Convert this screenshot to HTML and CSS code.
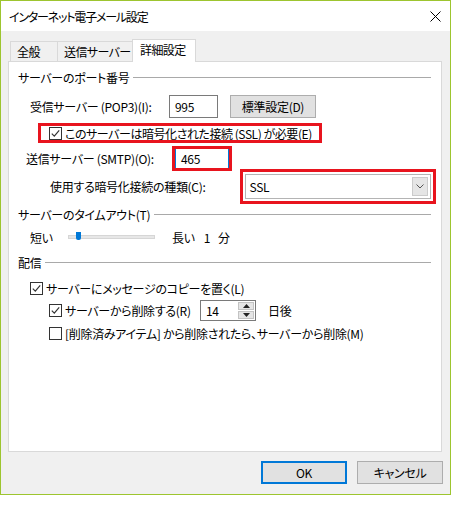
FILE: index.html
```html
<!DOCTYPE html>
<html lang="ja">
<head>
    <meta charset="UTF-8">
    <title>インターネット電子メール設定</title>
    <link rel="stylesheet" href="styles.css">
</head>
<body>
    <div class="dialog">
        <div class="titlebar">
            <span class="title">インターネット電子メール設定</span>
            <svg class="close" width="11" height="11" viewBox="0 0 11 11">
                <path d="M0.5 0.5 L10.5 10.5 M10.5 0.5 L0.5 10.5" stroke="#000" stroke-width="1" fill="none"/>
            </svg>
        </div>

        <div class="content">
            <div class="tabs">
                <div class="tab tab-general">全般</div>
                <div class="tab tab-send">送信サーバー</div>
                <div class="tab tab-active">詳細設定</div>
            </div>

            <div class="panel">
                <div class="row group h30">
                    <span>サーバーのポート番号</span><span class="rule"></span>
                </div>

                <div class="row h29">
                    <span class="label label-pop">受信サーバー (POP3)(I):</span>
                    <span class="textbox textbox-pop">995</span>
                    <button class="btn btn-default-port">標準設定(D)</button>
                </div>

                <div class="row h24">
                    <div class="mark mark-ssl">
                        <svg class="check" width="13" height="13" viewBox="0 0 13 13">
                            <rect x="0.5" y="0.5" width="12" height="12" fill="#fff" stroke="#333"/>
                            <path d="M2.8 6.6 L5.3 9.1 L10.2 3.4" stroke="#333" stroke-width="1.2" fill="none"/>
                        </svg>
                        <span class="check-text ssl-text">このサーバーは暗号化された接続 (SSL) が必要(E)</span>
                    </div>
                </div>

                <div class="row h26">
                    <span class="label label-smtp">送信サーバー (SMTP)(O):</span>
                    <span class="mark-box">
                        <span class="textbox textbox-smtp">465</span>
                    </span>
                </div>

                <div class="row h30">
                    <span class="label label-enc">使用する暗号化接続の種類(C):</span>
                    <div class="select">
                        <span>SSL</span>
                        <span class="drop">
                            <svg width="8" height="5" viewBox="0 0 8 5">
                                <path d="M0.5 0.5 L4 4 L7.5 0.5" stroke="#555" stroke-width="1" fill="none"/>
                            </svg>
                        </span>
                    </div>
                </div>

                <div class="row group h26">
                    <span>サーバーのタイムアウト(T)</span><span class="rule"></span>
                </div>

                <div class="row h20">
                    <span class="label label-short">短い</span>
                    <div class="track"><span class="thumb"></span></div>
                    <span class="label-long">長い</span>
                    <span class="minutes">1</span><span class="unit">分</span>
                </div>

                <div class="row group h30">
                    <span>配信</span><span class="rule"></span>
                </div>

                <div class="row h23 indent1">
                    <svg class="check" width="13" height="13" viewBox="0 0 13 13">
                        <rect x="0.5" y="0.5" width="12" height="12" fill="#fff" stroke="#333"/>
                        <path d="M2.8 6.6 L5.3 9.1 L10.2 3.4" stroke="#333" stroke-width="1.2" fill="none"/>
                    </svg>
                    <span class="check-text">サーバーにメッセージのコピーを置く(L)</span>
                </div>

                <div class="row h20 indent2">
                    <svg class="check" width="13" height="13" viewBox="0 0 13 13">
                        <rect x="0.5" y="0.5" width="12" height="12" fill="#fff" stroke="#333"/>
                        <path d="M2.8 6.6 L5.3 9.1 L10.2 3.4" stroke="#333" stroke-width="1.2" fill="none"/>
                    </svg>
                    <span class="check-text delete-text">サーバーから削除する(R)</span>
                    <div class="spin">
                        <span class="spin-value">14</span>
                        <span class="spin-buttons">
                            <span class="spin-btn">
                                <svg width="7" height="4" viewBox="0 0 7 4"><path d="M0 4 L3.5 0 L7 4 Z" fill="#222"/></svg>
                            </span>
                            <span class="spin-btn">
                                <svg width="7" height="4" viewBox="0 0 7 4"><path d="M0 0 L3.5 4 L7 0 Z" fill="#222"/></svg>
                            </span>
                        </span>
                    </div>
                    <span class="days">日後</span>
                </div>

                <div class="row h27 indent2">
                    <svg class="check" width="13" height="13" viewBox="0 0 13 13">
                        <rect x="0.5" y="0.5" width="12" height="12" fill="#fff" stroke="#333"/>
                    </svg>
                    <span class="check-text">[削除済みアイテム] から削除されたら、サーバーから削除(M)</span>
                </div>
            </div>

            <div class="footer">
                <button class="btn btn-ok">OK</button>
                <button class="btn btn-cancel">キャンセル</button>
            </div>
        </div>
    </div>
</body>
</html>
```

FILE: styles.css
```css
body {
    margin: 0;
    background-color: #fff;
    font-family: "Noto Sans CJK JP", "Noto Sans", sans-serif;
    font-size: 12px;
    color: #000;
    font-feature-settings: "palt";
    letter-spacing: -0.3px;
}

.dialog {
    width: 451px;
    height: 495px;
    box-sizing: border-box;
    border: 1px solid #9dc52f;
    display: flex;
    flex-direction: column;
    background-color: #f0f0f0;
}

.titlebar {
    height: 30px;
    background-color: #fff;
    display: flex;
    align-items: center;
    justify-content: space-between;
    padding: 0 9px 0 8px;
}

.title {
    font-size: 12px;
    letter-spacing: -1.2px;
}

.content {
    flex: 1;
    padding: 0 7px 0 7px;
}

.tabs {
    display: flex;
    align-items: flex-end;
    height: 31px;
    margin-bottom: -1px;
    padding-left: 2px;
}

.tab {
    box-sizing: border-box;
    height: 21px;
    border: 1px solid #d9d9d9;
    border-bottom: none;
    border-right: none;
    padding-left: 6px;
    line-height: 19px;
    white-space: nowrap;
    letter-spacing: -0.6px;
}

.tab-general {
    width: 47px;
}

.tab-send {
    width: 75px;
}

.tab-active {
    width: 64px;
    height: 23px;
    background-color: #fff;
    border-right: 1px solid #d9d9d9;
    padding-left: 7px;
    line-height: 20px;
    position: relative;
    z-index: 1;
}

.panel {
    width: 434px;
    height: 391px;
    box-sizing: border-box;
    border: 1px solid #d9d9d9;
    background-color: #fff;
    padding: 0 10px 0 9px;
}

.row {
    display: flex;
    align-items: center;
    white-space: nowrap;
}

.h20 { height: 20px; }
.h23 { height: 23px; }
.h24 { height: 24px; }
.h26 { height: 26px; }
.h27 { height: 27px; }
.h29 { height: 29px; }
.h30 { height: 30px; }

.group .rule {
    flex: 1;
    height: 1px;
    background-color: #a9a9a9;
    margin-left: 4px;
    margin-top: 1px;
}

.label {
    display: inline-block;
}

.label-pop {
    margin-left: 12px;
    width: 139px;
}

.label-smtp {
    margin-left: 8px;
    width: 146px;
}

.label-enc {
    margin-left: 32px;
    width: 196px;
}

.textbox {
    display: inline-block;
    box-sizing: border-box;
    background-color: #fff;
    line-height: 21px;
    padding-left: 5px;
}

.textbox-pop {
    width: 49px;
    height: 23px;
    border: 1px solid #7a7a7a;
}

.mark-box {
    display: inline-block;
    border: 3px solid #e8141e;
    height: 19px;
}

.textbox-smtp {
    width: 54px;
    height: 19px;
    border-left: 1px solid #0078d7;
    border-right: 1px solid #0078d7;
    line-height: 19px;
}

.btn {
    box-sizing: border-box;
    width: 86px;
    height: 23px;
    background-color: #e1e1e1;
    border: 1px solid #adadad;
    font-family: inherit;
    font-size: 12px;
    font-feature-settings: "palt";
    letter-spacing: -0.3px;
    color: #000;
    padding: 0;
}

.btn-default-port {
    margin-left: 12px;
}

.mark {
    display: flex;
    align-items: center;
    box-sizing: border-box;
    height: 14px;
    outline: 3px solid #e8141e;
}

.mark-ssl {
    margin-left: 23px;
    width: 278px;
    padding-left: 8px;
}

.ssl-text {
    letter-spacing: -0.45px;
}

.check {
    flex-shrink: 0;
}

.check-text {
    margin-left: 3px;
}

.select {
    box-sizing: border-box;
    width: 186px;
    height: 25px;
    border: 1px solid #b4b4b4;
    outline: 3px solid #e8141e;
    outline-offset: 2px;
    display: flex;
    align-items: center;
    justify-content: space-between;
    padding: 0 2px 0 3px;
}

.drop {
    box-sizing: border-box;
    width: 16px;
    height: 19px;
    background-color: #e5e5e5;
    border: 1px solid #cbcbcb;
    display: flex;
    align-items: center;
    justify-content: center;
}

.label-short {
    margin-left: 12px;
    width: 38px;
}

.track {
    width: 87px;
    height: 4px;
    box-sizing: border-box;
    background-color: #e7e7e7;
    border: 1px solid #d6d6d6;
    position: relative;
}

.thumb {
    position: absolute;
    left: 7px;
    top: -4px;
    width: 5px;
    height: 8px;
    background-color: #0078d7;
    border-radius: 0 0 2px 2px;
}

.label-long {
    margin-left: 17px;
}

.minutes {
    margin-left: 9px;
}

.unit {
    margin-left: 8px;
}

.indent1 {
    padding-left: 12px;
}

.indent2 {
    padding-left: 31px;
}

.delete-text {
    width: 135px;
}

.spin {
    box-sizing: border-box;
    width: 56px;
    height: 21px;
    border: 1px solid #7a7a7a;
    display: flex;
    justify-content: space-between;
    background-color: #fff;
}

.spin-value {
    padding-left: 5px;
    line-height: 19px;
}

.spin-buttons {
    width: 16px;
    display: flex;
    flex-direction: column;
    padding: 1px;
    gap: 1px;
}

.spin-btn {
    flex: 1;
    background-color: #e5e5e5;
    border: 1px solid #c3c3c3;
    display: flex;
    align-items: center;
    justify-content: center;
}

.days {
    margin-left: 12px;
}

.footer {
    display: flex;
    justify-content: flex-end;
    gap: 10px;
    padding-top: 9px;
    padding-right: 0;
}

.btn-ok {
    border: 2px solid #0078d7;
}
```
